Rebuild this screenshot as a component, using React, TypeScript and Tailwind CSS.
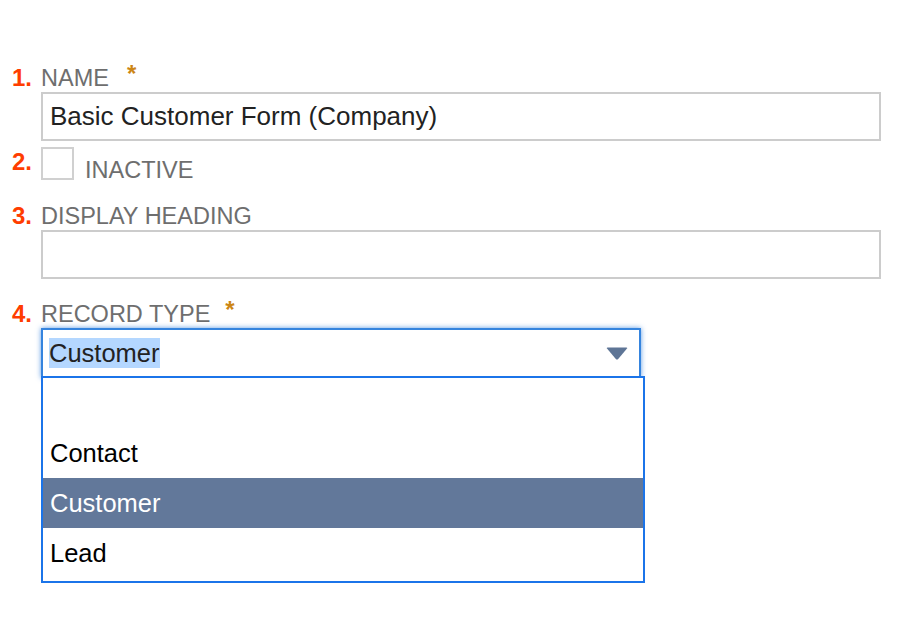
// Record form settings: numbered fields with an open record-type dropdown.
import React from "react";

const num = "w-[41px] shrink-0 pl-[12px] text-[24px] font-bold leading-[28px] text-[#ff3d00]";
const label = "text-[23.5px] leading-[28px] text-[#6e6e6e]";
const star = "text-[24px] font-bold leading-[28px] text-[#cc8616] -mt-[4px]";

function Asterisk({ gap }: { gap: string }) {
  return <span className={`${star} ${gap}`}>*</span>;
}

export default function App() {
  const options = ["", "Contact", "Customer", "Lead"];
  const active = "Customer";

  return (
    <div className="min-h-screen bg-white pt-[64px] font-['Liberation_Sans',Arial,Helvetica,sans-serif]">
      {/* 1. name */}
      <div className="flex">
        <div className={num}>1.</div>
        <div className="flex flex-col">
          <div className="flex items-start">
            <span className={label}>NAME</span>
            <Asterisk gap="ml-[18px]" />
          </div>
          <input
            readOnly
            value="Basic Customer Form (Company)"
            className="h-[49px] w-[840px] border-2 border-[#cccccc] px-[7px] text-[26px] text-[#222] outline-none"
          />
        </div>
      </div>

      {/* 2. inactive */}
      <div className="mt-[6px] flex">
        <div className={`${num} mt-[1px]`}>2.</div>
        <div className="flex items-start">
          <span className="h-[33px] w-[33px] border-2 border-[#d0d0d0]" />
          <span className={`${label} ml-[11px] mt-[9px]`}>INACTIVE</span>
        </div>
      </div>

      {/* 3. display heading */}
      <div className="mt-[18px] flex">
        <div className={num}>3.</div>
        <div className="flex flex-col">
          <span className={label}>DISPLAY HEADING</span>
          <input
            readOnly
            value=""
            className="h-[49px] w-[840px] border-2 border-[#cccccc] px-[7px] text-[26px] text-[#222] outline-none"
          />
        </div>
      </div>

      {/* 4. record type */}
      <div className="mt-[21px] flex">
        <div className={num}>4.</div>
        <div className="flex flex-col">
          <div className="flex items-start">
            <span className={label}>RECORD TYPE</span>
            <Asterisk gap="ml-[15px]" />
          </div>
          <div className="relative">
            <div className="flex h-[50px] w-[600px] items-center justify-between border-2 border-[#3584de] pl-[6px] pr-[11px] shadow-[0_0_5px_rgba(42,122,220,0.75)]">
              <span className="bg-[#b4d7ff] text-[25.5px] leading-[30px] text-[#222]">Customer</span>
              <svg width="22" height="13" viewBox="0 0 22 13" className="mt-[1px]">
                <path d="M1.5 0.5 H20.5 Q21.8 0.5 21 1.6 L12.2 12 Q11 13.2 9.8 12 L1 1.6 Q0.2 0.5 1.5 0.5 Z" fill="#5e7596" />
              </svg>
            </div>
            <ul className="absolute left-0 top-[48px] w-[604px] border-2 border-[#1b74e9] bg-white pb-[3px]">
              {options.map((o) => (
                <li
                  key={o || "blank"}
                  className={
                    o === active
                      ? "h-[50px] bg-[#62789a] pl-[7px] text-[25.5px] leading-[50px] text-white"
                      : "h-[50px] pl-[7px] text-[25.5px] leading-[50px] text-black"
                  }
                >
                  {o}
                </li>
              ))}
            </ul>
          </div>
        </div>
      </div>
    </div>
  );
}
